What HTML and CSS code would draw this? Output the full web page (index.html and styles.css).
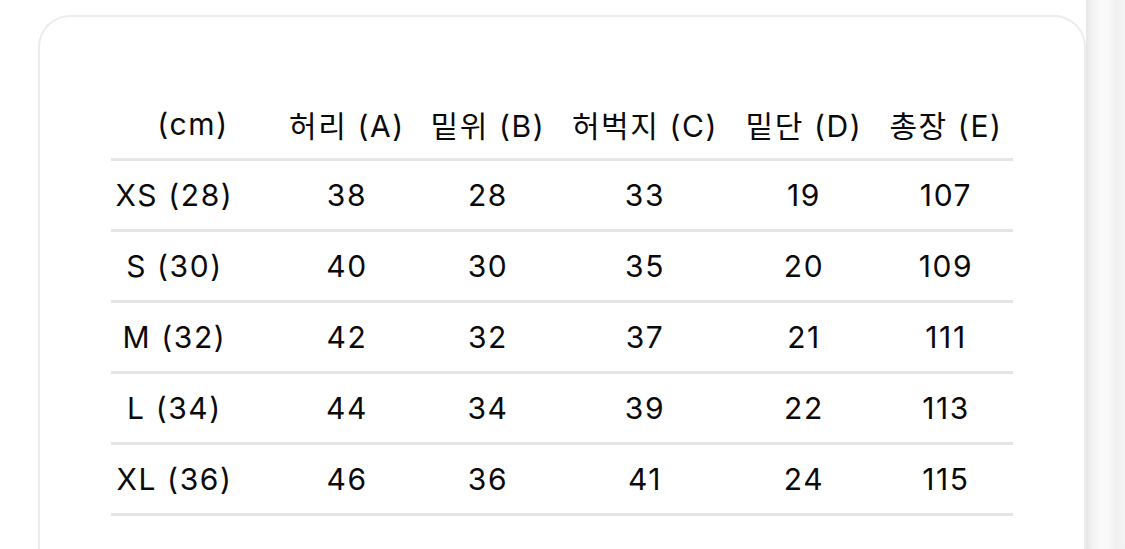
FILE: index.html
```html
<!DOCTYPE html>
<html lang="ko">
<head>
<meta charset="utf-8">
<link rel="stylesheet" href="styles.css">
</head>
<body>
<div class="page">
  <div class="card">
    <div class="table">
      <div class="row head">
        <div class="c first">(cm)</div>
        <div class="c">허리 (A)</div>
        <div class="c">밑위 (B)</div>
        <div class="c">허벅지 (C)</div>
        <div class="c">밑단 (D)</div>
        <div class="c">총장 (E)</div>
      </div>
      <div class="row">
        <div class="c first">XS (28)</div>
        <div class="c">38</div><div class="c">28</div><div class="c">33</div><div class="c">19</div><div class="c">107</div>
      </div>
      <div class="row">
        <div class="c first">S (30)</div>
        <div class="c">40</div><div class="c">30</div><div class="c">35</div><div class="c">20</div><div class="c">109</div>
      </div>
      <div class="row">
        <div class="c first">M (32)</div>
        <div class="c">42</div><div class="c">32</div><div class="c">37</div><div class="c">21</div><div class="c">111</div>
      </div>
      <div class="row">
        <div class="c first">L (34)</div>
        <div class="c">44</div><div class="c">34</div><div class="c">39</div><div class="c">22</div><div class="c">113</div>
      </div>
      <div class="row">
        <div class="c first">XL (36)</div>
        <div class="c">46</div><div class="c">36</div><div class="c">41</div><div class="c">24</div><div class="c">115</div>
      </div>
    </div>
  </div>
  <div class="side"></div>
</div>
</body>
</html>
```

FILE: styles.css
```css
html, body {
  margin: 0;
  padding: 0;
  background: #ffffff;
  overflow: hidden;
}
body {
  width: 1125px;
  height: 549px;
  font-family: Inter, "Noto Sans CJK KR", sans-serif;
  color: #0a0a0a;
}
.page {
  display: flex;
  height: 549px;
  padding-top: 15px;
  padding-left: 38px;
  box-sizing: border-box;
}
.card {
  width: 1048px;
  height: 534px;
  box-sizing: border-box;
  border: 2px solid #ececec;
  border-bottom: none;
  border-radius: 32px 32px 0 0;
  background: #ffffff;
  padding-top: 75px;
  padding-left: 71px;
  flex: none;
}
.side {
  flex: 1;
  margin-top: -15px;
  height: 549px;
  background: linear-gradient(to right, #e6e6e6 0px, #f2f2f2 6px, #fafafa 14px, #f9f9f9 22px, #f0f0f0 30px, #f4f4f4 39px);
}
.table {
  width: 902px;
}
.row {
  display: grid;
  grid-template-columns: 166px 138px 144px 170px 148px 136px;
  height: 71px;
  box-sizing: border-box;
  border-bottom: 3px solid #e5e5e5;
  align-items: center;
  font-size: 30px;
  letter-spacing: 1.6px;
}
.row.head {
  height: 69px;
  padding-bottom: 2px;
}
.c {
  text-align: center;
  white-space: nowrap;
  padding-left: 2px;
}
.first {
  padding-right: 41px;
}
.head .first {
  padding-right: 4px;
}
```
